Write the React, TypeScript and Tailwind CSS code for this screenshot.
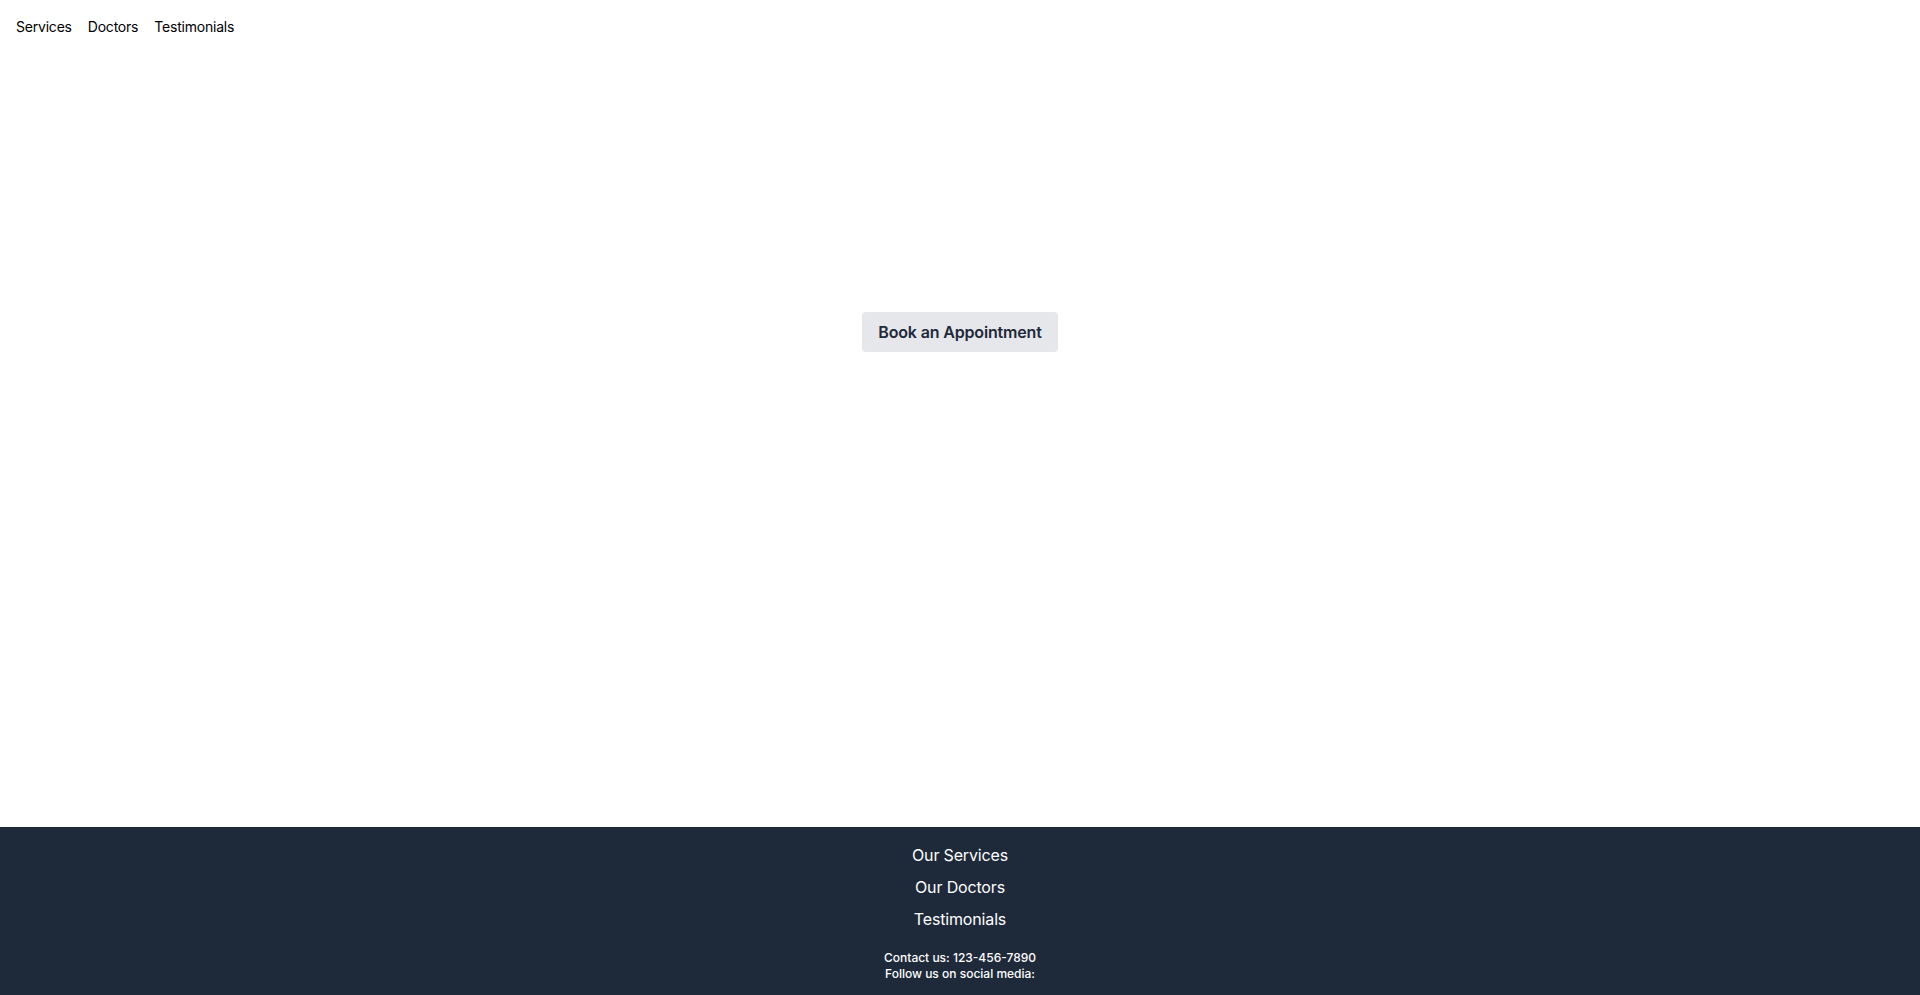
export default function App() {
  const font = { fontFamily: "Inter, 'Liberation Sans', sans-serif" };

  return (
    <div className="min-h-screen flex flex-col bg-white" style={font}>
      <nav className="flex items-center gap-4 px-4 h-[54px] text-sm text-black tracking-[-0.015em]">
        <a href="#services">Services</a>
        <a href="#doctors">Doctors</a>
        <a href="#testimonials">Testimonials</a>
      </nav>

      <main className="flex-1">
        <section className="flex justify-center pt-[258px]">
          <button className="px-4 py-2 bg-gray-200 text-gray-800 font-semibold rounded tracking-[-0.01em]">
            Book an Appointment
          </button>
        </section>
      </main>

      <footer className="bg-gray-800 text-white pt-4 pb-[13px] flex flex-col items-center">
        <ul className="flex flex-col items-center gap-2 text-base tracking-[-0.01em]">
          <li>Our Services</li>
          <li>Our Doctors</li>
          <li>Testimonials</li>
        </ul>
        <div className="mt-[19px] text-xs font-medium text-center">
          <p>Contact us: 123-456-7890</p>
          <p>Follow us on social media:</p>
        </div>
      </footer>
    </div>
  );
}
